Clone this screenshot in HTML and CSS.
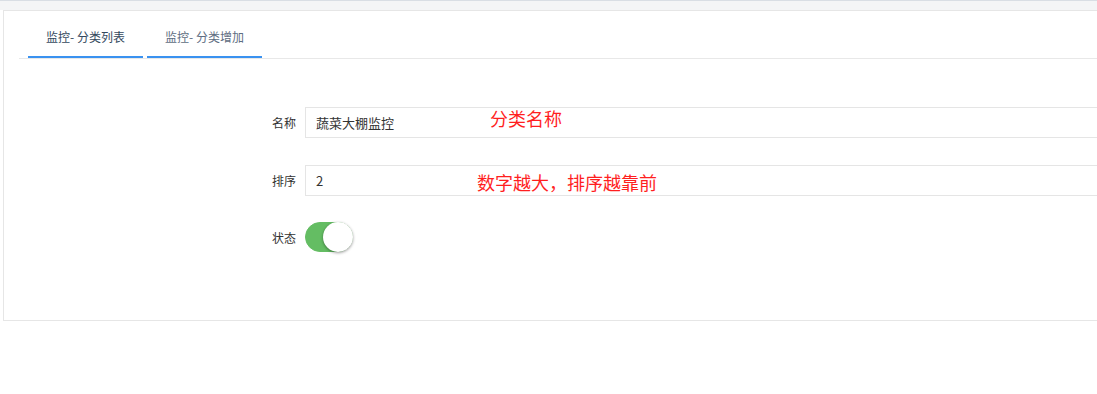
FILE: index.html
```html
<!DOCTYPE html>
<html lang="zh-CN">
<head>
  <meta charset="UTF-8">
  <meta name="viewport" content="width=device-width, initial-scale=1.0">
  <title>监控分类增加</title>
  <link rel="stylesheet" href="styles.css">
</head>
<body>
  <div class="topbar"></div>
  <div class="main">
    <div class="panel">
      <ul class="tabs">
        <li class="tab active">监控- 分类列表</li>
        <li class="tab">监控- 分类增加</li>
      </ul>
      <form class="form">
        <div class="row">
          <label class="label">名称</label>
          <div class="field">
            <input type="text" class="input" value="蔬菜大棚监控">
            <span class="note note-name">分类名称</span>
          </div>
        </div>
        <div class="row">
          <label class="label">排序</label>
          <div class="field">
            <input type="text" class="input" value="2">
            <span class="note note-sort">数字越大，排序越靠前</span>
          </div>
        </div>
        <div class="row row-switch">
          <label class="label">状态</label>
          <div class="field">
            <span class="switch on"><span class="knob"></span></span>
          </div>
        </div>
      </form>
    </div>
  </div>
</body>
</html>
```

FILE: styles.css
```css
body {
  margin: 0;
  background: #fff;
  font-family: "Noto Sans CJK SC", "Noto Sans", sans-serif;
  color: #333;
  overflow: hidden;
}

.topbar {
  height: 9px;
  background: #f4f5f6;
  border-top: 1px solid #d9dee4;
}

.main {
  padding-left: 3px;
}

/* right edge of the panel is cut off by the window */
.panel {
  height: 309px;
  border: 1px solid #e6e6e6;
  border-right: none;
  background: #fff;
}

.tabs {
  list-style: none;
  margin: 0 0 0 15px;
  padding: 0 0 0 9px;
  display: flex;
  border-bottom: 1px solid #e8e8e8;
}

.tab {
  width: 115px;
  margin-right: 4px;
  padding: 16px 0 9px;
  line-height: 20px;
  font-size: 12px;
  text-align: center;
  color: #5e6d82;
  border-bottom: 2px solid #3a92f0;
}

.tab.active {
  color: #34495e;
}

.form {
  margin: 0;
  padding-top: 48px;
}

.row {
  display: flex;
  align-items: center;
  margin-bottom: 27px;
}

.row-switch {
  margin-top: -1px;
}

.label {
  width: 292px;
  margin-right: 9px;
  text-align: right;
  font-size: 12px;
  color: #333;
}

.field {
  position: relative;
  flex: 1;
}

.input {
  display: block;
  box-sizing: border-box;
  width: 100%;
  height: 31px;
  padding: 0 10px;
  border: 1px solid #e5e5e5;
  border-right: none;
  font-family: inherit;
  font-size: 13px;
  color: #333;
  outline: none;
}

.note {
  position: absolute;
  font-size: 18px;
  line-height: 20px;
  color: #ff1f1f;
}

.note-name {
  left: 185px;
  top: 1px;
}

.note-sort {
  left: 172px;
  top: 7px;
}

.switch {
  position: relative;
  display: block;
  box-sizing: border-box;
  width: 48px;
  height: 30px;
  border-radius: 15px;
  background: #64bd63;
  border: 1px solid #64bd63;
}

.switch .knob {
  position: absolute;
  right: -1px;
  top: -1px;
  width: 30px;
  height: 30px;
  border-radius: 50%;
  background: #fff;
  box-shadow: 0 1px 3px rgba(0, 0, 0, 0.4);
}
```
